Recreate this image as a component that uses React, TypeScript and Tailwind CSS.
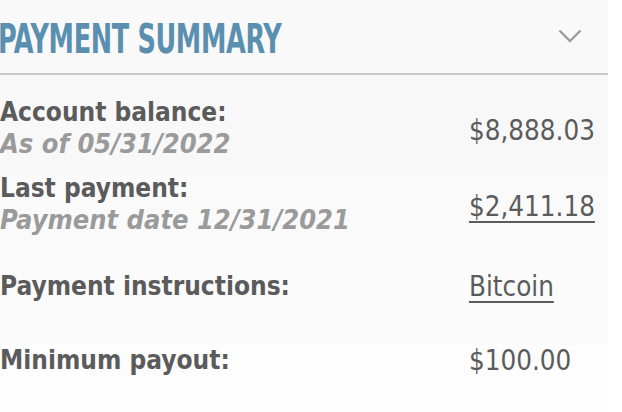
import React from "react";

const body = { fontFamily: '"DejaVu Sans Condensed", "DejaVu Sans", sans-serif' };

function Row({
  label,
  sub,
  value,
  link,
  className,
}: {
  label: string;
  sub?: string;
  value: string;
  link?: boolean;
  className: string;
}) {
  return (
    <div className={className}>
      <div className="flex items-center">
        <div className="w-[469px] shrink-0">
          <div className="text-[26px] leading-[31px] font-bold text-[#5b5b5b] whitespace-nowrap">{label}</div>
          {sub && (
            <div className="text-[27px] leading-[31px] font-bold italic text-[#9a9a9a] whitespace-nowrap">{sub}</div>
          )}
        </div>
        <div
          className={
            "text-[27.5px] leading-[31px] text-[#5b5b5b] whitespace-nowrap " +
            (sub ? "mt-[5px] " : "") +
            (link ? "underline decoration-[2px] underline-offset-[5px]" : "")
          }
        >
          {value}
        </div>
      </div>
    </div>
  );
}

export default function App() {
  return (
    <div className="w-[622px] h-[412px] bg-white overflow-hidden" style={body}>
      <div className="w-[608px] h-full bg-[#fbfbfb]">
        <div className="h-[73px] flex items-center justify-between bg-[#f9f9f9] pr-[26px]">
          <div className="-ml-[2px] mt-[4px] w-[290px] shrink-0">
            <div className="origin-left scale-x-[0.71] text-[40px] leading-none font-bold text-[#5a8fb0] tracking-[-0.5px] whitespace-nowrap">
              PAYMENT SUMMARY
            </div>
          </div>
          <svg width="24" height="14" viewBox="0 0 24 14" className="mt-[-2px]">
            <path d="M1.5 1.5 L12 12 L22.5 1.5" fill="none" stroke="#9c9c9c" strokeWidth="2.4" />
          </svg>
        </div>
        <div className="h-[2px] bg-[#c8c8c8]" />
        <Row
          className="h-[95px] pt-[22px] bg-[#f8f8f8]"
          label="Account balance:"
          sub="As of 05/31/2022"
          value="$8,888.03"
        />
        <Row
          className="h-[95px] pt-[3px] bg-[#fafafa]"
          label="Last payment:"
          sub="Payment date 12/31/2021"
          value="$2,411.18"
          link
        />
        <Row
          className="h-[80px] pt-[6px] bg-[#fbfbfb]"
          label="Payment instructions:"
          value="Bitcoin"
          link
        />
        <Row className="bg-[#fdfdfd] h-full" label="Minimum payout:" value="$100.00" />
      </div>
    </div>
  );
}
